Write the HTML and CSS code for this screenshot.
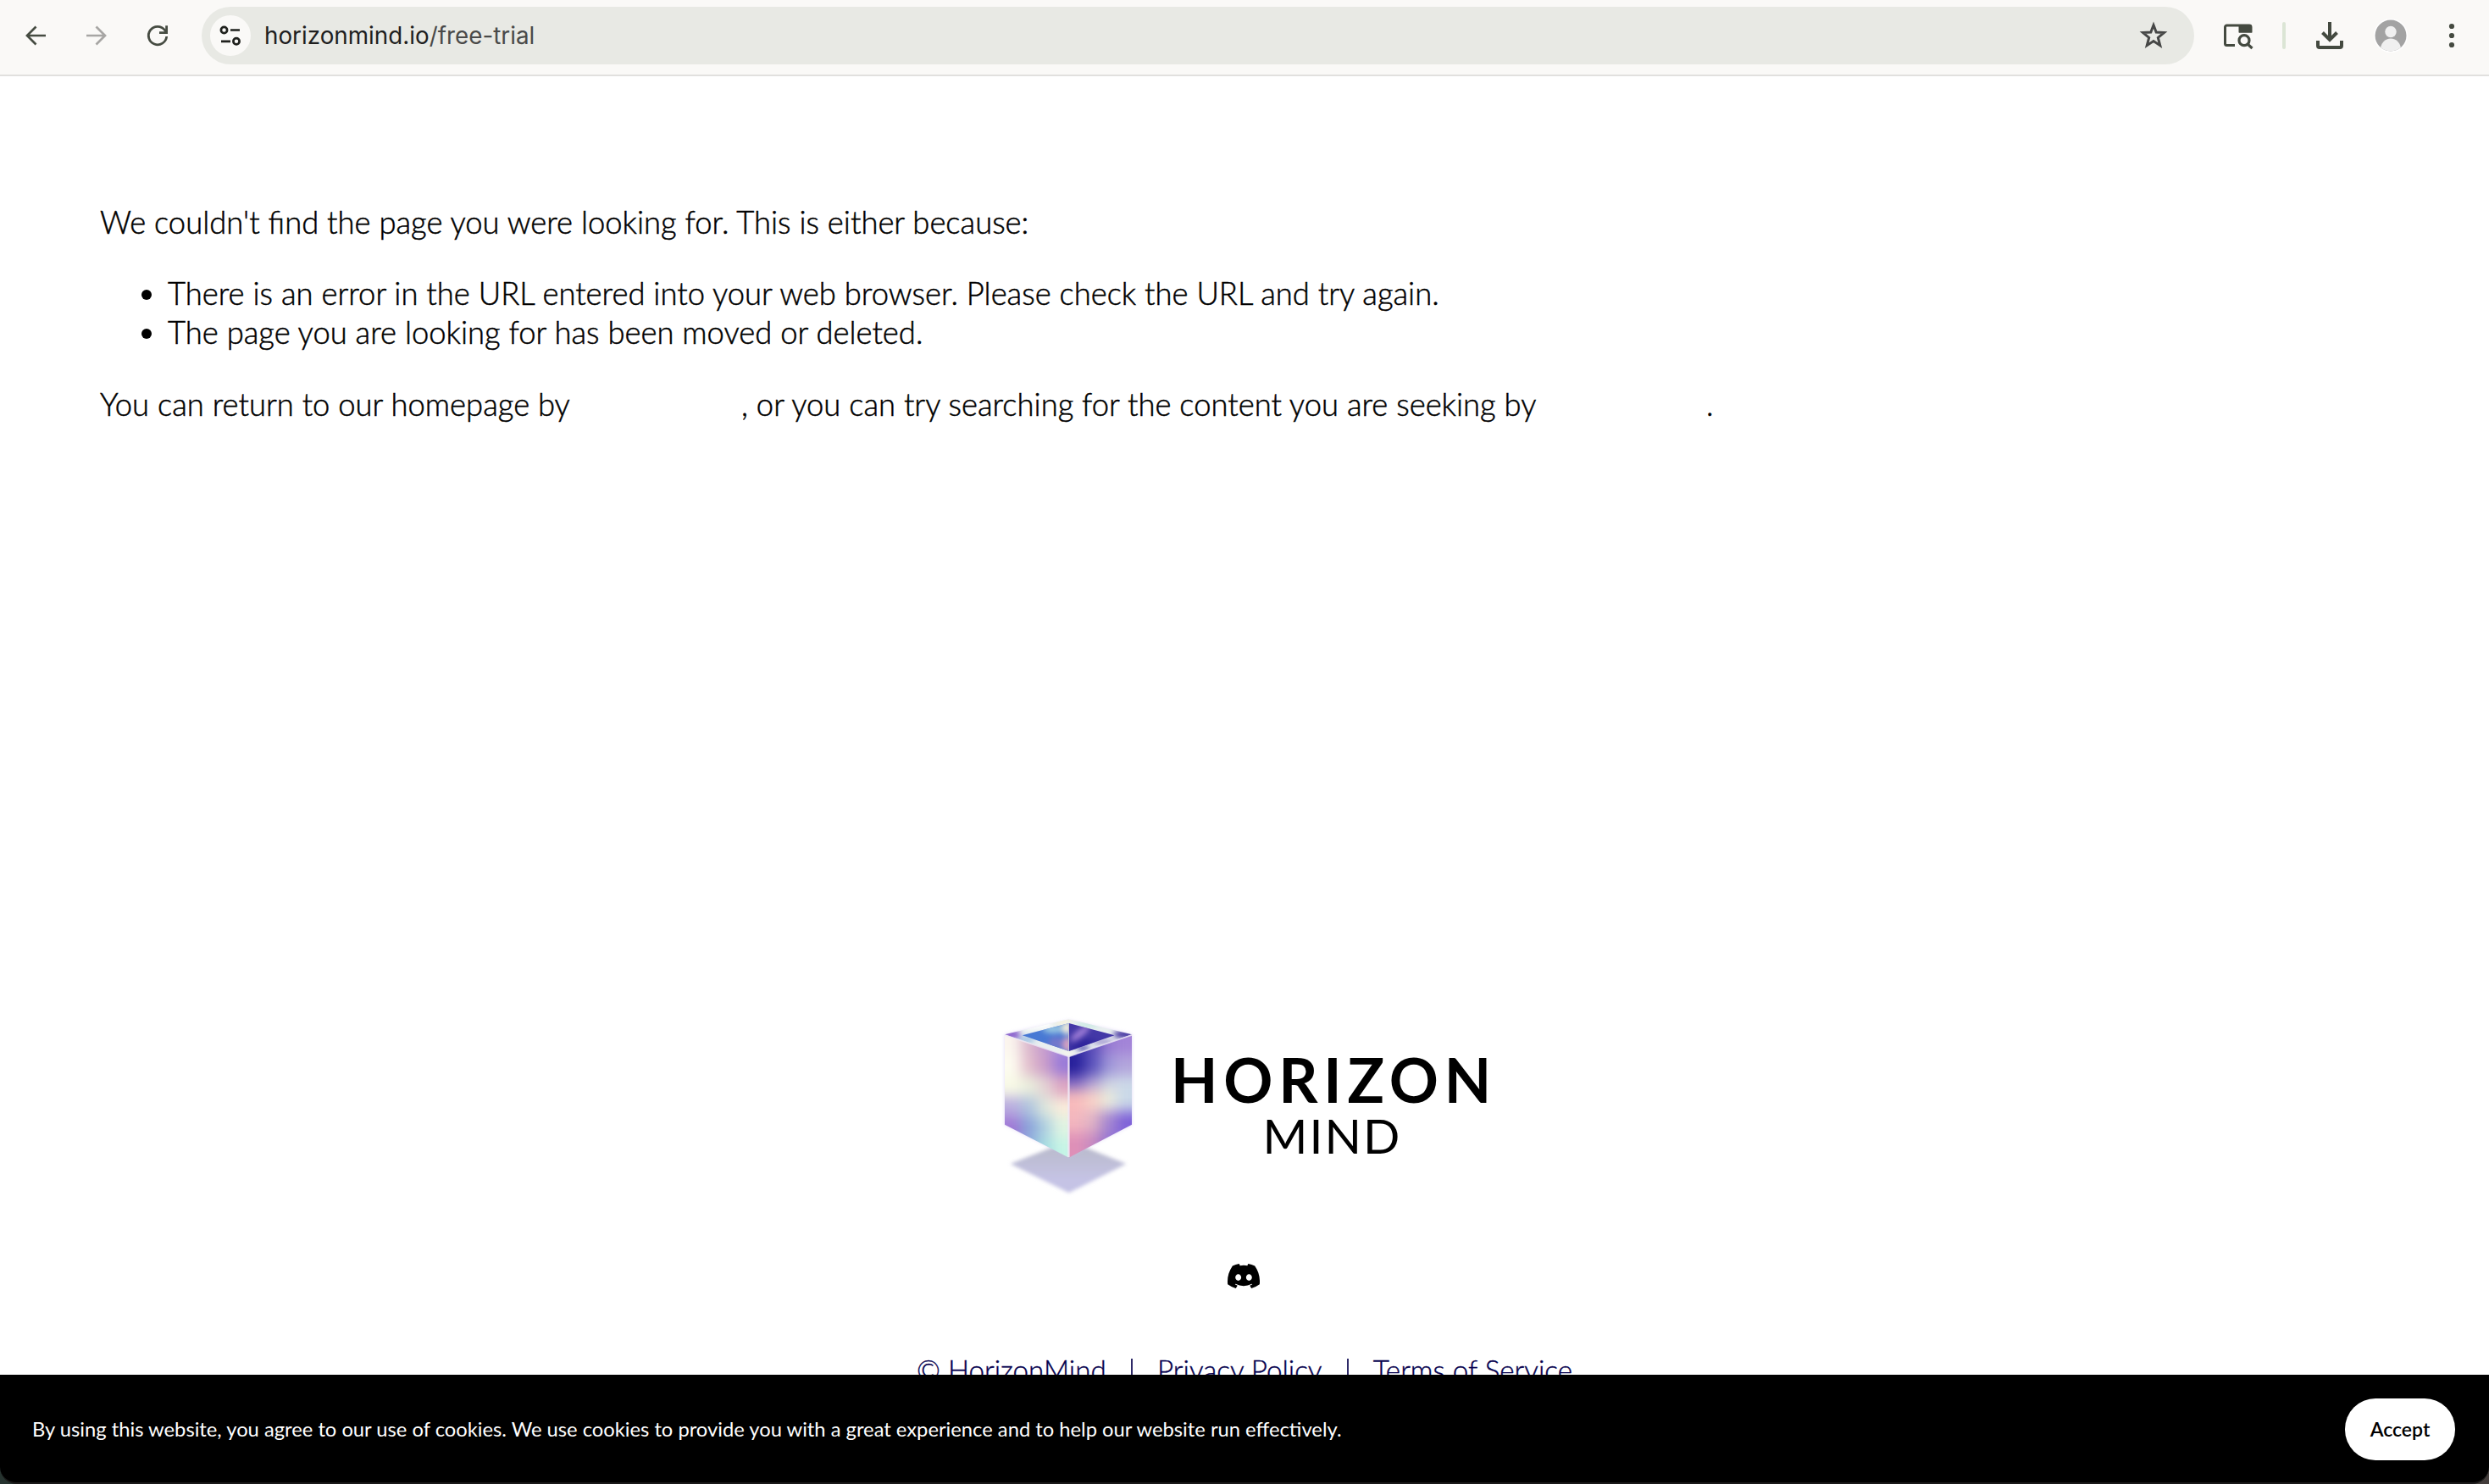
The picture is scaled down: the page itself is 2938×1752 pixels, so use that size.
FILE: index.html
```html
<!DOCTYPE html>
<html lang="en">
<head>
<meta charset="utf-8">
<title>Page not found</title>
<link rel="stylesheet" href="styles.css">
</head>
<body>
<header class="toolbar">
  <nav class="nav">
    <svg class="nav-icon" viewBox="0 0 32 32"><path d="M16.5 5.5 6 16l10.5 10.5M6.500 16H28" fill="none" stroke="#464c42" stroke-width="2.700"/></svg>
    <svg class="nav-icon" viewBox="0 0 32 32"><path d="M15.500 5.500 26 16 15.500 26.500M25.500 16H4" fill="none" stroke="#a7a6a4" stroke-width="2.700"/></svg>
    <svg class="nav-icon" viewBox="0 0 32 32"><path d="M26.700 17A10.700 10.700 0 1 1 24.500 9.500L26 12" fill="none" stroke="#464c42" stroke-width="2.800"/><path d="M26.600 4.200V12.600H18" fill="none" stroke="#464c42" stroke-width="2.800"/></svg>
  </nav>
  <div class="address">
    <span class="site-info"><svg width="28" height="28" viewBox="0 0 28 28" fill="none" stroke="#1f211d" stroke-width="2.700"><circle cx="6.500" cy="7.500" r="3.600"/><path d="M14 7.500H25M3 20.800H14"/><circle cx="21" cy="20.800" r="3.600"/></svg></span>
    <span class="url">horizonmind.io<span class="path">/free-trial</span></span>
    <svg class="star" viewBox="0 0 32 32"><path d="M16 4.300 19 12.200 27.800 12.700 21 18.300 23.300 27 16 22.200 8.700 27 11 18.300 4.200 12.700 13 12.200Z" fill="none" stroke="#464746" stroke-width="2.800"/></svg>
  </div>
  <div class="actions">
    <svg class="tab-search" viewBox="0 0 36 32"><path d="M14 26.500H4.500A2 2 0 0 1 2.500 24.500V5A2 2 0 0 1 4.500 3H31A2 2 0 0 1 33 5V10H20V3" fill="none" stroke="#444a40" stroke-width="3"/><path d="M19 2H32Q34 2 34 4V11.500H19Z" fill="#444a40"/><circle cx="25" cy="20.700" r="6" fill="none" stroke="#444a40" stroke-width="3.200"/><path d="m29 25 5.500 5" stroke="#444a40" stroke-width="3.200"/></svg>
    <span class="divider"></span>
    <svg class="download" viewBox="0 0 32 32" fill="none" stroke="#444a40" stroke-width="4"><path d="M16 0V21M7.500 12.500 16 21 24.500 12.500"/><path d="M2 22V28Q2 30 4 30H28Q30 30 30 28V22" /></svg>
    <svg class="avatar" viewBox="0 0 40 40"><circle cx="20" cy="20" r="20" fill="#fff"/><clipPath id="avatarClip"><circle cx="20" cy="20" r="18.500"/></clipPath><g clip-path="url(#avatarClip)"><path fill="#a3a3a3" d="M0 0h40v40H0z"/><circle cx="20" cy="15.500" r="6.700" fill="#f0f0f0"/><ellipse cx="20" cy="36" rx="12" ry="12.500" fill="#f0f0f0"/></g></svg>
    <svg class="menu" viewBox="0 0 8 32" fill="#444a40"><circle cx="4" cy="5" r="3.100"/><circle cx="4" cy="16" r="3.100"/><circle cx="4" cy="27" r="3.100"/></svg>
  </div>
</header>

<main class="content">
  <p>We couldn't find the page you were looking for. This is either because:</p>
  <ul>
    <li>There is an error in the URL entered into your web browser. Please check the URL and try again.</li>
    <li>The page you are looking for has been moved or deleted.</li>
  </ul>
  <p class="return"><span class="home-part">You can return to our homepage by</span><span class="search-part">, or you can try searching for the content you are seeking by</span><span>.</span></p>
</main>

<footer class="footer">
  <div class="brand">
    <svg class="cube" viewBox="0 0 600 720">
      <defs>
        <clipPath id="left"><path d="M78 124 305 200V560L78 443Z"/></clipPath>
        <clipPath id="right"><path d="M305 200 528 124V443L305 560Z"/></clipPath>
        <clipPath id="rim"><path clip-rule="evenodd" d="M78 124 305 70 528 124 305 202ZM140 127 305 84 467 127 305 183Z"/></clipPath>
        <clipPath id="innerL"><path d="M140 127 305 84V183Z"/></clipPath>
        <clipPath id="innerR"><path d="M305 84 467 127 305 183Z"/></clipPath>
        <filter id="blob" filterUnits="userSpaceOnUse" x="-100" y="-50" width="850" height="800" color-interpolation-filters="sRGB"><feGaussianBlur stdDeviation="23"/></filter>
        <filter id="small" filterUnits="userSpaceOnUse" x="0" y="0" width="600" height="300" color-interpolation-filters="sRGB"><feGaussianBlur stdDeviation="10"/></filter>
        <filter id="soft" x="-20%" y="-20%" width="140%" height="140%"><feGaussianBlur stdDeviation="7"/></filter>
        <linearGradient id="shade" x1="0" y1="0" x2="0" y2="1"><stop offset=".2" stop-color="#bbbccf"/><stop offset=".75" stop-color="#c5c3e5"/></linearGradient>
      </defs>
      <path d="M98 582 305 500 508 582 305 685Z" fill="url(#shade)" filter="url(#soft)"/>
      <path d="M78 124 305 74 528 124V443L305 556 78 443Z" fill="#cdbef0" opacity=".6" filter="url(#soft)"/>
      <g clip-path="url(#left)"><g filter="url(#blob)">
        <path fill="#fbf5ee" d="M-20 40h155v155H-20z"/><path fill="#dcb8cc" d="M135 40h57v155h-57z"/><path fill="#c49bd0" d="M192 40h56v155h-56z"/><path fill="#a98bdc" d="M248 40h150v155H248z"/>
        <path fill="#fdfcf0" d="M-20 195h155v75H-20z"/><path fill="#e2bfcd" d="M135 195h57v75h-57z"/><path fill="#cb9cc8" d="M192 195h56v75h-56z"/><path fill="#9879d8" d="M248 195h150v75H248z"/>
        <path fill="#f8f9e6" d="M-20 270h155v75H-20z"/><path fill="#e9eddc" d="M135 270h57v75h-57z"/><path fill="#e4d3d4" d="M192 270h56v75h-56z"/><path fill="#dda6c2" d="M248 270h150v75H248z"/>
        <path fill="#b9addf" d="M-20 345h155v70H-20z"/><path fill="#aec4de" d="M135 345h57v70h-57z"/><path fill="#dce6dc" d="M192 345h56v70h-56z"/><path fill="#faebda" d="M248 345h150v70H248z"/>
        <path fill="#9f78d6" d="M-20 415h155v75H-20z"/><path fill="#8aa3da" d="M135 415h57v75h-57z"/><path fill="#aed0e0" d="M192 415h56v75h-56z"/><path fill="#dff4e2" d="M248 415h150v75H248z"/>
        <path fill="#9a7cd6" d="M-20 490h155v155H-20z"/><path fill="#8fb0dc" d="M135 490h57v155h-57z"/><path fill="#a4dce0" d="M192 490h56v155h-56z"/><path fill="#c6f5e6" d="M248 490h150v155H248z"/>
      </g></g>
      <g clip-path="url(#right)"><g filter="url(#blob)">
        <path fill="#3028a0" d="M200 40h161v155H200z"/><path fill="#5a4cb8" d="M361 40h56v155h-56z"/><path fill="#9679d2" d="M417 40h56v155h-56z"/><path fill="#a384d8" d="M473 40h155v155H473z"/>
        <path fill="#261f9b" d="M200 195h161v75H200z"/><path fill="#5a52bc" d="M361 195h56v75h-56z"/><path fill="#9c94d8" d="M417 195h56v75h-56z"/><path fill="#b3a5dc" d="M473 195h155v75H473z"/>
        <path fill="#8068c4" d="M200 270h161v50H200z"/><path fill="#b0a0d4" d="M361 270h56v50h-56z"/><path fill="#ccd2e2" d="M417 270h56v50h-56z"/><path fill="#ccd9e8" d="M473 270h155v50H473z"/>
        <path fill="#f8babb" d="M200 320h161v75H200z"/><path fill="#f8d0c6" d="M361 320h56v75h-56z"/><path fill="#e9eadb" d="M417 320h56v75h-56z"/><path fill="#c9d8e8" d="M473 320h155v75H473z"/>
        <path fill="#f3b6be" d="M200 395h161v75H200z"/><path fill="#dfb2c4" d="M361 395h56v75h-56z"/><path fill="#a485d0" d="M417 395h56v75h-56z"/><path fill="#7d60d8" d="M473 395h155v75H473z"/>
        <path fill="#df90b7" d="M200 470h161v175H200z"/><path fill="#c789c0" d="M361 470h56v175h-56z"/><path fill="#9473d2" d="M417 470h56v175h-56z"/><path fill="#8468d8" d="M473 470h155v175H473z"/>
      </g></g>
      <g clip-path="url(#rim)">
        <path fill="#e9eff0" d="M60 60h480v150H60z"/>
        <g filter="url(#small)">
          <ellipse cx="98" cy="124" rx="35" ry="22" fill="#8f68cf"/>
          <ellipse cx="155" cy="142" rx="30" ry="14" fill="#a5c5e4"/>
          <path fill="#fff" d="M165 65 235 60 245 100 150 107Z"/>
          <ellipse cx="285" cy="79" rx="28" ry="15" fill="#f6f2df"/>
          <ellipse cx="370" cy="90" rx="40" ry="12" fill="#cceae5"/>
          <ellipse cx="510" cy="124" rx="48" ry="15" fill="#41309f"/>
          <ellipse cx="425" cy="150" rx="38" ry="10" fill="#9c90ce"/>
          <ellipse cx="355" cy="172" rx="24" ry="9" fill="#4943a9"/>
          <ellipse cx="298" cy="191" rx="24" ry="9" fill="#f9f8eb"/>
        </g>
      </g>
      <g clip-path="url(#innerL)"><path fill="#4879d4" d="M130 70h180v120H130z"/><g filter="url(#small)"><ellipse cx="250" cy="105" rx="38" ry="14" fill="#9bc9e2"/><ellipse cx="298" cy="100" rx="20" ry="24" fill="#eeeada"/><ellipse cx="260" cy="155" rx="28" ry="22" fill="#7377cb"/><ellipse cx="300" cy="160" rx="18" ry="28" fill="#d5a1c2"/></g></g>
      <g clip-path="url(#innerR)"><path fill="#4338a7" d="M300 70h180v120H300z"/><g filter="url(#small)"><ellipse cx="345" cy="120" rx="42" ry="12" fill="#a27fd8" transform="rotate(-38 345 120)"/><path fill="#2e239b" d="M300 175 360 140 410 150 350 185Z"/></g></g>
      <path d="M78 126 305 202 528 126" fill="none" stroke="#eeeaf5" stroke-width="5" opacity=".8"/>
      <path d="M304.500 198V558" stroke="#f2e9f5" stroke-width="7" opacity=".85"/>
      <path d="M304.500 86V182" stroke="#d6d0ce" stroke-width="2"/>
    </svg>
    <div class="wordmark"><span class="horizon">HORIZON</span><span class="mind">MIND</span></div>
  </div>
  <svg class="discord" viewBox="0 0 24 18.200"><path d="M20.300 1.500A19.800 19.800 0 0 0 15.400 0c-.2.400-.5.900-.6 1.300a18.300 18.300 0 0 0-5.500 0C9.100.900 8.800.400 8.600 0A19.700 19.700 0 0 0 3.700 1.500C.5 6.200-.3 10.700.1 15.200a19.900 19.900 0 0 0 6 3c.5-.6.900-1.300 1.300-2a13 13 0 0 1-1.900-.9l.4-.3a14.200 14.200 0 0 0 12.200 0l.4.300c-.6.400-1.200.700-1.900.9.400.7.800 1.400 1.200 2a19.800 19.800 0 0 0 6.100-3c.5-5.200-.8-9.700-3.600-13.700ZM8 12.500c-1.200 0-2.200-1.100-2.200-2.400S6.800 7.600 8 7.600s2.200 1.100 2.200 2.500S9.200 12.500 8 12.500Zm8 0c-1.200 0-2.200-1.100-2.200-2.400S14.800 7.600 16 7.600s2.200 1.100 2.200 2.500-1 2.400-2.200 2.400Z"/></svg>
  <div class="legal"><span>© HorizonMind</span><span class="bar"></span><span>Privacy Policy</span><span class="bar"></span><span>Terms of Service</span></div>
</footer>

<div class="cookie-frame"><div class="cookie">
  <span class="cookie-text">By using this website, you agree to our use of cookies. We use cookies to provide you with a great experience and to help our website run effectively.</span>
  <button class="accept">Accept</button>
</div></div>
</body>
</html>
```
FILE: styles.css
```css
* { box-sizing: border-box; }
body { margin: 0; width: 2938px; height: 1752px; overflow: hidden; background: #fff; color: #000; font-family: Lato, "Open Sans", sans-serif; display: flex; flex-direction: column; }
svg { display: block; flex: none; }

.toolbar { height: 90px; flex: none; display: flex; align-items: flex-start; padding: 8px 40px 0 26px; background: #faf9f7; border-bottom: 2px solid #e1e0de; }
.nav { display: flex; gap: 40px; height: 68px; align-items: center; width: 212px; }
.nav-icon { width: 32px; height: 32px; }
.address { width: 2352px; height: 68px; border-radius: 34px; background: #e8e9e4; display: flex; align-items: center; padding: 0 32px 0 10px; }
.site-info { width: 48px; height: 48px; border-radius: 50%; background: #faf9f7; display: flex; align-items: center; justify-content: center; }
.url { margin-left: 16px; flex: 1; font: 27.8px/34px Inter, sans-serif; color: #1f1f1f; }
.path { color: #4a4a49; }
.star { width: 34px; height: 34px; margin-right: -1px; }
.actions { display: flex; align-items: center; height: 68px; padding-left: 34px; }
.tab-search { width: 36px; height: 32px; margin-top: 2px; }
.divider { width: 4px; height: 32px; border-radius: 2px; background: #dbe5d5; margin-left: 34px; }
.download { width: 32px; height: 32px; margin-left: 36px; }
.avatar { width: 40px; height: 40px; margin-left: 36px; }
.menu { width: 8px; height: 32px; margin-left: 48px; }

.content { height: 1094px; flex: none; padding: 149px 118px 0; font-size: 36.4px; font-weight: 300; line-height: 46px; -webkit-text-stroke: 0.5px #000; }
.content p, .content ul { margin: 0; white-space: nowrap; }
.content ul { padding-left: 80px; margin: 38px 0 39px; }
.return { display: flex; }
.home-part { width: 757px; }
.search-part { width: 1139px; }

.footer { display: flex; flex-direction: column; align-items: center; }
.brand { display: flex; width: 618px; height: 240px; margin-top: -4px; }
.cube { width: 200px; height: 240px; }
.wordmark { width: 418px; display: flex; flex-direction: column; align-items: center; padding: 58px 0 0; line-height: 72px; white-space: nowrap; }
.horizon { font-size: 72px; font-weight: 700; letter-spacing: 6.8px; padding-left: 11px; }
.mind { font-size: 57px; line-height: 60px; font-weight: 400; letter-spacing: 2px; padding-left: 7px; }
.discord { width: 38px; height: 29px; margin: 72px 2px 0 0; }
.legal { display: flex; justify-content: space-between; width: 774px; margin-top: 73px; font-size: 33.2px; line-height: 46px; font-weight: 300; color: #05004e; white-space: nowrap; -webkit-text-stroke: 0.4px #05004e; }
.bar { width: 2px; height: 34px; background: #2e2a68; margin-top: 10px; }

.cookie-frame { position: fixed; left: 0; right: 0; bottom: 0; height: 129px; background: linear-gradient(90deg, #26332f 50%, #433d3b 50%); }
.cookie { height: 129px; background: #000; border-bottom: 2px solid #1b1a1a; border-radius: 0 0 20px 20px; display: flex; justify-content: space-between; padding: 28px 40px 0 38px; color: #fff; font-size: 23.76px; }
.cookie-text { line-height: 72px; white-space: nowrap; }
.accept { width: 130px; height: 73px; border: 0; border-radius: 36px; background: #fff; color: #000; padding: 0 0 2px; font: 600 23px Lato, sans-serif; }
```
